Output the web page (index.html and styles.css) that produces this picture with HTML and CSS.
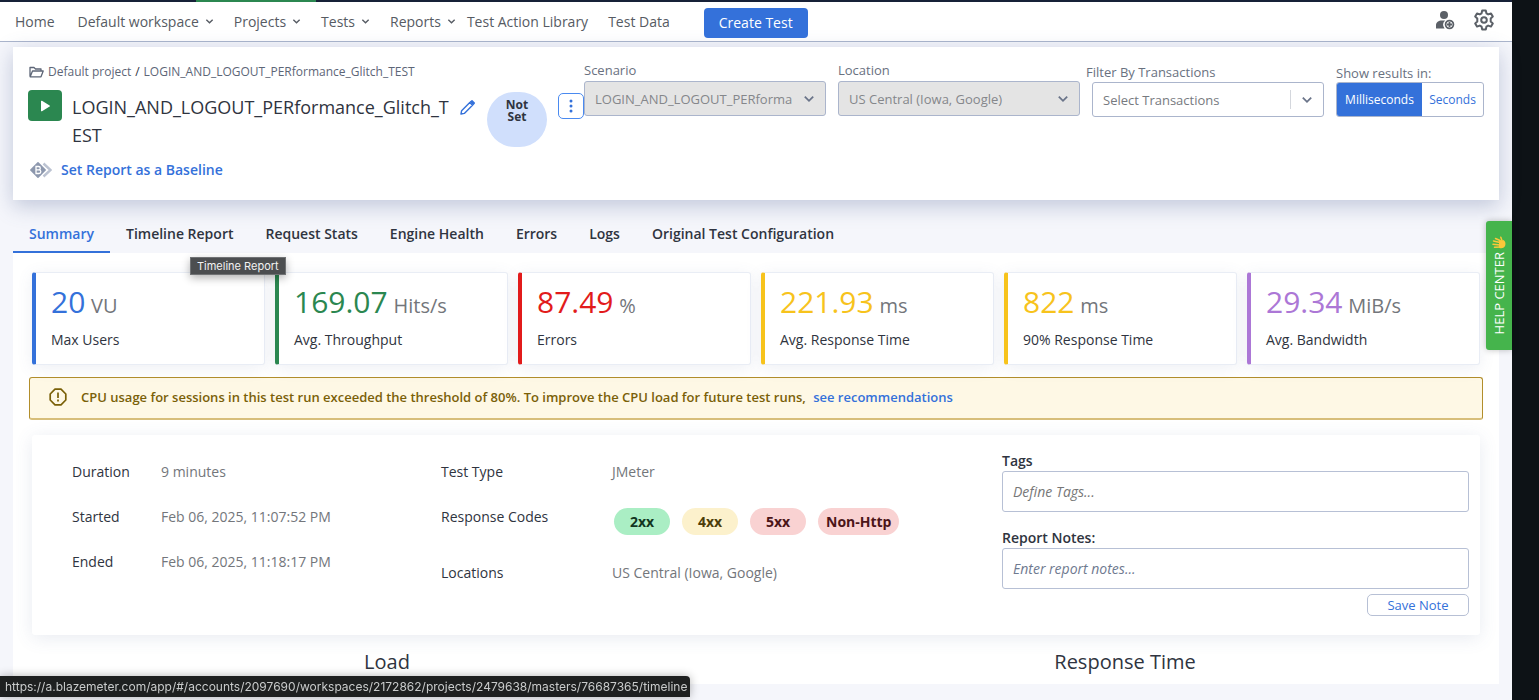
FILE: index.html
```html
<!DOCTYPE html>
<html lang="en">
<head>
<meta charset="utf-8">
<title>Report Summary</title>
<link rel="stylesheet" href="styles.css">
</head>
<body>
<svg class="defs" aria-hidden="true">
  <symbol id="chevron" viewBox="0 0 10 10"><path d="M1.500 3 5 6.500 8.500 3" fill="none" stroke="currentColor" stroke-width="1.500"/></symbol>
</svg>
<div class="shell">
  <div class="app">
    <header class="topbar">
      <nav class="nav">
        <a class="nav-home" href="#">Home</a>
        <button class="nav-menu" type="button">Default workspace<svg><use href="#chevron"/></svg></button>
        <button class="nav-menu active" type="button">Projects<svg><use href="#chevron"/></svg></button>
        <button class="nav-menu" type="button">Tests<svg><use href="#chevron"/></svg></button>
        <button class="nav-menu" type="button">Reports<svg><use href="#chevron"/></svg></button>
        <a class="nav-link" href="#">Test Action Library</a>
        <a class="nav-link" href="#">Test Data</a>
      </nav>
      <button class="create" type="button">Create Test</button>
      <div class="tools">
        <button type="button" aria-label="Add user">
          <svg width="20" height="20" viewBox="0 0 20 20"><circle cx="9" cy="5" r="4" fill="#5b6067"/><path d="M1 18.500v-3c0-3.500 2.500-5 6-5h3.200a5.300 5.300 0 0 0-.6 8z" fill="#5b6067"/><circle cx="14.500" cy="14.500" r="3.900" fill="#fff" stroke="#5b6067" stroke-width="1.800"/><path d="M14.500 12v5M12 14.500h5" stroke="#5b6067" stroke-width="1.800"/></svg>
        </button>
        <button type="button" aria-label="Settings">
          <svg width="22" height="22" viewBox="0 0 22 22" fill="none" stroke="#5b6067" stroke-width="2" stroke-linejoin="round"><path d="M9.200 1.500h3.600l.6 2.800 1.800 1.100 2.800-1 1.800 3.200-2.100 1.900v3l2.100 1.900-1.800 3.200-2.800-1-1.800 1.100-.6 2.800H9.200l-.6-2.800-1.800-1.100-2.800 1-1.800-3.200 2.100-1.900v-3L2.200 7.600 4 4.400l2.800 1 1.800-1.100z"/><circle cx="11" cy="11" r="2.800"/></svg>
        </button>
      </div>
    </header>

    <main class="content">
      <section class="report-head">
        <div class="report-info">
          <div class="crumbs">
            <svg width="15" height="12" viewBox="0 0 15 12" fill="none" stroke="#5d6677" stroke-width="1.300" stroke-linejoin="round"><path d="M1 10.500V1.500h4l1.500 1.500H12v2M1.200 10.800 3.500 5h10.700L12 10.800z"/></svg>
            <a href="#">Default project</a><span>/</span><a href="#">LOGIN_AND_LOGOUT_PERformance_Glitch_TEST</a>
          </div>
          <div class="title-row">
            <button class="play" type="button" aria-label="Run test"><svg width="12" height="12" viewBox="0 0 12 12"><path d="M2 1.300v9.400c0 .6.500.8 1 .5l7.600-4.600c.5-.3.500-.9 0-1.200L3 .8c-.5-.3-1-.1-1 .5z" fill="#fff"/></svg></button>
            <h1>LOGIN_AND_LOGOUT_PERformance_Glitch_TEST</h1>
            <button class="edit" type="button" aria-label="Edit name"><svg width="15" height="15" viewBox="0 0 15 15" fill="none" stroke="#3471da" stroke-width="1.400" stroke-linejoin="round"><path d="M1 14l.6-3.300 8.200-8.200 2.700 2.700-8.200 8.200z"/><path d="M10.600 1.700 12 .7l2.300 2.300-1 1.400z" fill="#3471da"/></svg></button>
            <span class="verdict">Not<br>Set</span>
            <button class="kebab" type="button" aria-label="More actions"><svg width="4" height="14" viewBox="0 0 4 14" fill="#3471da"><circle cx="2" cy="2" r="1.500"/><circle cx="2" cy="7" r="1.500"/><circle cx="2" cy="12" r="1.500"/></svg></button>
          </div>
          <div class="baseline">
            <svg width="22" height="16" viewBox="0 0 22 16"><path d="M13.500 1.500 20.500 8l-7 6.500" fill="none" stroke="#bcc3d2" stroke-width="2.400"/><path d="M8 .8l7.200 7.200L8 15.200.8 8z" fill="#8d98ae" stroke="#8d98ae" stroke-width="1.500" stroke-linejoin="round"/><path d="M6 4.500h2.600a1.700 1.700 0 0 1 0 3.400H6zM6 7.900h3a1.800 1.800 0 0 1 0 3.600H6z" fill="none" stroke="#fff" stroke-width="1.300"/></svg>
            <a href="#">Set Report as a Baseline</a>
          </div>
        </div>
        <div class="field">
          <label for="scenario">Scenario</label>
          <div class="select-wrap"><select id="scenario" disabled><option>LOGIN_AND_LOGOUT_PERforma</option></select><svg><use href="#chevron"/></svg></div>
        </div>
        <div class="field">
          <label for="location">Location</label>
          <div class="select-wrap"><select id="location" disabled><option>US Central (Iowa, Google)</option></select><svg><use href="#chevron"/></svg></div>
        </div>
        <div class="field filter">
          <label for="transactions">Filter By Transactions</label>
          <div class="select-wrap"><select id="transactions"><option>Select Transactions</option></select><svg><use href="#chevron"/></svg></div>
        </div>
        <div class="field units">
          <span class="units-label" id="units">Show results in:</span>
          <div class="segmented" role="group" aria-labelledby="units">
            <button class="on" type="button">Milliseconds</button><button type="button">Seconds</button>
          </div>
        </div>
      </section>

      <nav class="tabs">
        <a class="current" href="#">Summary</a>
        <a href="#">Timeline Report<span class="tip" role="tooltip">Timeline Report</span></a>
        <a href="#">Request Stats</a>
        <a href="#">Engine Health</a>
        <a href="#">Errors</a>
        <a href="#">Logs</a>
        <a href="#">Original Test Configuration</a>
      </nav>

      <section class="panel">
        <div class="metrics">
          <article class="metric blue"><p class="figure">20 <small>VU</small></p><p>Max Users</p></article>
          <article class="metric green"><p class="figure">169.07 <small>Hits/s</small></p><p>Avg. Throughput</p></article>
          <article class="metric red"><p class="figure">87.49 <small>%</small></p><p>Errors</p></article>
          <article class="metric yellow"><p class="figure">221.93 <small>ms</small></p><p>Avg. Response Time</p></article>
          <article class="metric yellow"><p class="figure">822 <small>ms</small></p><p>90% Response Time</p></article>
          <article class="metric purple"><p class="figure">29.34 <small>MiB/s</small></p><p>Avg. Bandwidth</p></article>
        </div>

        <div class="alert">
          <svg width="18" height="18" viewBox="0 0 18 18" fill="none" stroke="#7a6008" stroke-width="1.700"><path d="M6 1.200h6L16.800 6v6L12 16.800H6L1.200 12V6z" stroke-linejoin="round"/><path d="M9 4.500v5.500M9 11.500v2"/></svg>
          <p>CPU usage for sessions in this test run exceeded the threshold of 80%. To improve the CPU load for future test runs, <a href="#">see recommendations</a></p>
        </div>

        <div class="details">
          <dl class="times">
            <dt>Duration</dt><dd>9 minutes</dd>
            <dt>Started</dt><dd>Feb 06, 2025, 11:07:52 PM</dd>
            <dt>Ended</dt><dd>Feb 06, 2025, 11:18:17 PM</dd>
          </dl>
          <dl class="setup">
            <dt>Test Type</dt><dd>JMeter</dd>
            <dt>Response Codes</dt>
            <dd class="codes"><span class="code ok">2xx</span><span class="code warn">4xx</span><span class="code bad">5xx</span><span class="code bad">Non-Http</span></dd>
            <dt>Locations</dt><dd>US Central (Iowa, Google)</dd>
          </dl>
          <form class="notes">
            <label for="tags">Tags</label>
            <input id="tags" type="text" placeholder="Define Tags...">
            <label for="notes">Report Notes:</label>
            <input id="notes" class="note" type="text" placeholder="Enter report notes...">
            <button type="button">Save Note</button>
          </form>
        </div>

        <div class="charts"><h2>Load</h2><h2>Response Time</h2></div>
      </section>
    </main>

    <button class="help" type="button">
      <span>HELP CENTER</span>
      <svg width="14" height="14" viewBox="0 0 14 14"><g stroke="#fcc73a" stroke-width="1.500" stroke-linecap="round"><path d="M8 4.500 3.500 2.500M8 6.500 1.500 5M8 9 1 8.300M8.500 11 2.500 11.300M10.500 6 8.800 1.200"/></g><path d="M7 4l3.500.5 1-.5c1.800 1.200 2.300 3 1.800 5.300-.6 2.700-3.800 3.700-6.300 2.500z" fill="#fcc73a"/></svg>
    </button>
  </div>
  <div class="edge"></div>
</div>
<div class="status">https://a.blazemeter.com/app/#/accounts/2097690/workspaces/2172862/projects/2479638/masters/76687365/timeline</div>
</body>
</html>
```
FILE: styles.css
```css
* { box-sizing: border-box; }
body { margin: 0; font: 14px/20px "Open Sans", "Noto Sans", sans-serif; color: #2f3440; background: #fff; }
h1, h2, p, dl, dd { margin: 0; }
a { color: inherit; text-decoration: none; }
button, input, select { font: inherit; color: inherit; }
button { padding: 0; border: 0; background: none; cursor: pointer; }
svg { flex: none; }
.defs { position: absolute; width: 0; height: 0; }

.shell { display: flex; min-height: 100vh; }
.app { position: relative; flex: 1; min-width: 0; background: #f5f6fb; }
.edge { width: 27px; background: #0d1216; }

.topbar { display: flex; align-items: center; height: 42px; padding-left: 15px; padding-right: 17px; background: #fff; border-top: 2px solid #172138; border-bottom: 1px solid #abb5cc; color: #565b63; }
.nav { display: flex; align-items: center; gap: 20px; height: 100%; white-space: nowrap; }
.nav-home { margin-right: 3px; }
.nav-menu { display: flex; align-items: center; gap: 6px; font-weight: 500; }
.nav-menu svg { width: 9px; height: 9px; }
.nav-menu + .nav-link { margin-left: -9px; }
.nav-menu.active { position: relative; }
.nav-menu.active::before { content: ""; position: absolute; top: -12px; left: -38px; width: 120px; height: 2px; background: #2b8750; }
.create { height: 30px; margin-left: 34px; margin-top: 3px; padding: 0 15px; border-radius: 4px; background: #3471da; color: #fff; font-weight: 500; white-space: nowrap; }
.tools { display: flex; align-items: center; gap: 18px; margin: 0 0 3px auto; }
.tools svg { display: block; }

.content { padding: 5px 13px 16px; }
.report-head { display: grid; grid-template-columns: minmax(0, 544fr) minmax(0, 242fr) minmax(0, 242fr) minmax(0, 232fr) minmax(148px, 148fr); column-gap: 12px; min-height: 153px; padding: 13px 15px; background: #fff; box-shadow: 0 6px 20px rgba(80, 100, 150, .32); }
.report-info { margin-right: -12px; padding-top: 4px; }
.crumbs { display: flex; align-items: center; gap: 4px; height: 16px; font-size: 12px; line-height: 16px; color: #5d6677; white-space: nowrap; }
.crumbs svg { margin-left: 1px; }
.crumbs span { color: #2f3440; }
.title-row { display: flex; align-items: flex-start; margin-top: 10px; }
.play { display: grid; place-items: center; width: 34px; height: 31px; border-radius: 4px; background: #2b8750; }
h1 { flex: 0 1 379px; margin-left: 10px; margin-top: 3px; font-size: 18px; line-height: 28px; font-weight: 400; overflow-wrap: anywhere; }
.edit { margin: 10px 12px 0 9px; }
.edit svg { display: block; }
.verdict { flex: none; width: 60px; height: 55px; margin-top: 2px; padding-top: 7px; border-radius: 28px; background: #d0dffc; font-size: 12px; line-height: 12px; font-weight: 700; text-align: center; }
.kebab { display: grid; place-items: center; flex: none; width: 26px; height: 26px; margin: 3px 0 0 auto; border: 1px solid #4a8af0; border-radius: 5px; }
.baseline { display: flex; align-items: center; gap: 9px; margin: 11px 0 0 2px; color: #3471da; font-weight: 600; }

.field { font-size: 13px; color: #69717f; }
.field label, .units-label { display: block; height: 21px; line-height: 21px; white-space: nowrap; }
.select-wrap { position: relative; }
.select-wrap select { display: block; width: 100%; height: 35px; padding: 0 32px 0 10px; appearance: none; border: 1px solid #abb5cc; border-radius: 3px; background: #fff; color: #777a80; opacity: 1; }
.select-wrap select:disabled { background: #e4e4e4; color: #85878b; }
.select-wrap svg { position: absolute; right: 11px; top: 12px; width: 12px; height: 12px; color: #6a7489; pointer-events: none; }
.filter { padding-top: 1px; }
.filter label { margin-left: -6px; line-height: 22px; }
.filter .select-wrap::after { content: ""; position: absolute; top: 8px; right: 33px; width: 1px; height: 19px; background: #d4d7dd; }
.units { padding-top: 1px; }
.units-label { line-height: 24px; }
.segmented { display: flex; height: 35px; border: 1px solid #abb5cc; border-radius: 3px; overflow: hidden; font-size: 12px; font-weight: 500; color: #3471da; }
.segmented button { flex: 1; }
.segmented .on { flex: 0 0 85px; background: #3471da; color: #fff; }

.tabs { display: flex; padding-top: 15px; font-weight: 600; white-space: nowrap; }
.tabs a { position: relative; height: 38px; padding: 0 16px; line-height: 37px; }
.tabs .current { color: #3471da; border-bottom: 2px solid #3471da; }
.tip { position: absolute; z-index: 2; left: 80px; top: 42px; padding: 0 6px; border: 1px solid #707274; background: #4c4e50; color: #f2f2f2; font: 400 11px/16px Inter, sans-serif; box-shadow: 0 3px 8px rgba(0, 0, 0, .3); }

.panel { background: #fff; padding: 19px 19px 8px; }
.metrics { display: grid; grid-template-columns: repeat(6, minmax(0, 1fr)); gap: 10px; }
.metric { height: 93px; padding: 11px 15px; border: 1px solid #e9edf5; border-left: 4px solid; border-radius: 3px; background: #fff; box-shadow: 0 3px 16px rgba(80, 100, 150, .1); white-space: nowrap; }
.metric p { color: #2f3440; }
.metric .figure { height: 36px; margin-bottom: 10px; font-size: 30px; line-height: 36px; color: inherit; }
.metric small { margin-left: -2px; font-size: 20px; color: #73767b; }
.metric.blue { border-left-color: #3471da; color: #3471da; }
.metric.green { border-left-color: #2b8750; color: #2b8750; }
.metric.red { border-left-color: #e21b1b; color: #e21b1b; }
.metric.yellow { border-left-color: #f7c31c; color: #f7c31c; }
.metric.purple { border-left-color: #ac77d6; color: #ac77d6; }

.alert { display: flex; align-items: center; gap: 14px; height: 43px; margin: 12px -3px 0; padding: 0 19px 3px; border: 1px solid #b28e2b; border-bottom: 2px solid #d7be7a; border-radius: 3px; background: #fef8e5; color: #7a6008; font-size: 13px; font-weight: 600; }
.alert a { margin-left: 4px; color: #3471da; }

.details { display: grid; grid-template-columns: 369fr 561fr 467fr; min-height: 200px; margin-top: 15px; padding: 16px 11px 14px 40px; background: #fff; border-radius: 3px; box-shadow: 0 3px 18px rgba(80, 100, 150, .13); }
.details dl { display: grid; align-content: start; }
.details dd { color: #73767b; }
.times { grid-template-columns: 89px 1fr; grid-template-rows: 45px 45px 45px; padding-top: 11px; }
.setup { grid-template-columns: 171px 1fr; grid-template-rows: 45px 56px 45px; padding-top: 11px; }
.codes { display: flex; gap: 12px; padding: 1px 0 0 2px; }
.code { min-width: 56px; height: 27px; padding: 0 8px; border-radius: 14px; line-height: 27px; font-weight: 700; text-align: center; }
.ok { background: #aaeec4; color: #12361f; }
.warn { background: #fcf1cc; color: #4d3d0a; }
.bad { background: #f9d2d2; color: #4b1518; }
.notes { display: flex; flex-direction: column; }
.notes label { height: 20px; font-weight: 600; }
.notes input { height: 41px; margin-bottom: 16px; padding: 0 10px; border: 1px solid #b7c0d5; border-radius: 3px; font-style: italic; }
.notes .note { margin-bottom: 5px; }
.notes input::placeholder { color: #777; opacity: 1; }
.notes .note::placeholder { color: #6f7a90; }
.notes button { align-self: flex-end; width: 102px; height: 22px; border: 1px solid #b7c0d5; border-radius: 5px; color: #3471da; font-size: 13px; line-height: 18px; }

.charts { display: grid; grid-template-columns: 1fr 1fr; margin: 13px -14px 0; text-align: center; }
.charts h2 { font-size: 20px; line-height: 28px; font-weight: 500; }

.help { position: absolute; right: 0; top: 221px; display: flex; flex-direction: column-reverse; align-items: center; justify-content: center; gap: 2px; width: 26px; height: 129px; border-radius: 3px 0 0 3px; background: #45b44c; color: #fff; box-shadow: 0 0 6px rgba(0, 0, 0, .25); }
.help span { writing-mode: vertical-rl; rotate: 180deg; font-size: 13px; line-height: 18px; }

.status { position: fixed; z-index: 3; left: 0; bottom: 3px; height: 21px; padding: 0 3px 0 5px; border-top-right-radius: 4px; background: #1e2020; color: #c9cbcb; font: 400 12px/21px Inter, sans-serif; white-space: nowrap; box-shadow: 0 0 10px rgba(0, 0, 0, .3); }
```
